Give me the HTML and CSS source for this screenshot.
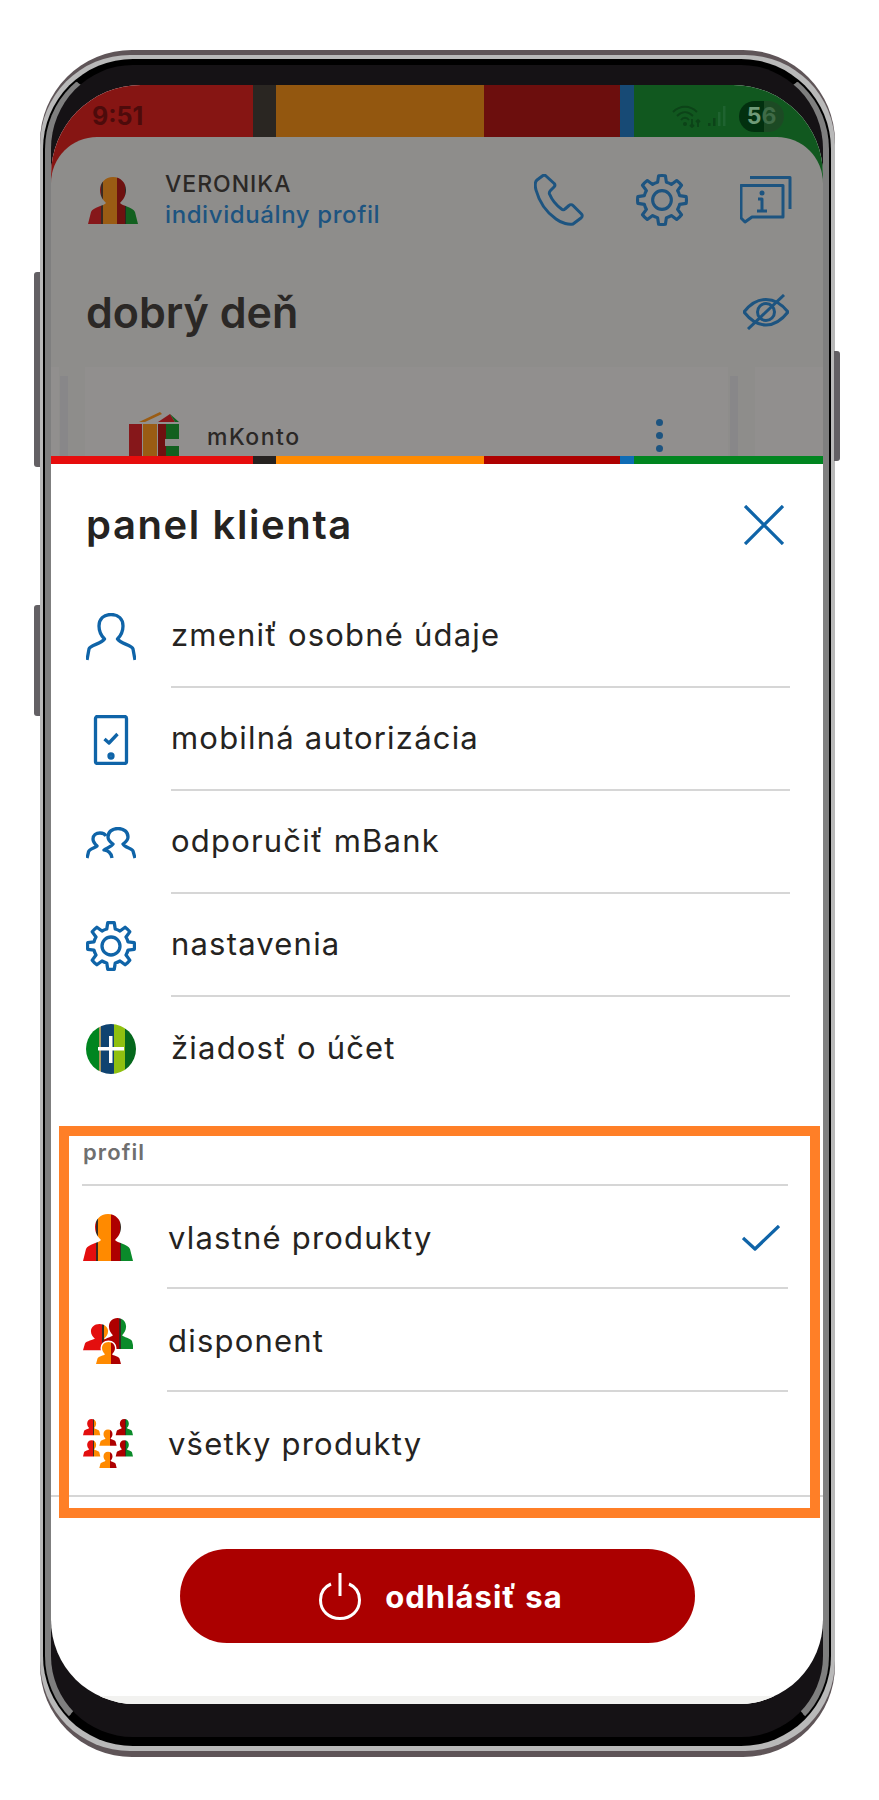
FILE: index.html
```html
<!DOCTYPE html>
<html lang="sk">
  <head>
    <meta charset="utf-8" />
    <title>mBank - panel klienta</title>
    <link rel="stylesheet" href="styles.css">
  </head>

  <body>
    <!-- shared gradients and shapes -->
    <svg class="defs" width="0" height="0" aria-hidden="true">
      <defs>
        <linearGradient id="g-all">
          <stop offset="0" stop-color="#e30e0e"/><stop offset=".26" stop-color="#e30e0e"/>
          <stop offset=".26" stop-color="#3a2a22"/><stop offset=".29" stop-color="#3a2a22"/>
          <stop offset=".29" stop-color="#ff8a00"/><stop offset=".57" stop-color="#ff8a00"/>
          <stop offset=".57" stop-color="#ae0000"/><stop offset=".74" stop-color="#ae0000"/>
          <stop offset=".74" stop-color="#3a2a22"/><stop offset=".76" stop-color="#3a2a22"/>
          <stop offset=".76" stop-color="#0a8a2a"/><stop offset="1" stop-color="#0a8a2a"/>
        </linearGradient>
        <linearGradient id="g-all-dim">
          <stop offset="0" stop-color="#86171a"/><stop offset=".26" stop-color="#86171a"/>
          <stop offset=".26" stop-color="#3a2a22"/><stop offset=".29" stop-color="#3a2a22"/>
          <stop offset=".29" stop-color="#9a5c14"/><stop offset=".57" stop-color="#9a5c14"/>
          <stop offset=".57" stop-color="#6e1110"/><stop offset=".74" stop-color="#6e1110"/>
          <stop offset=".74" stop-color="#2a2622"/><stop offset=".76" stop-color="#2a2622"/>
          <stop offset=".76" stop-color="#12601f"/><stop offset="1" stop-color="#12601f"/>
        </linearGradient>
        <linearGradient id="g-left">
          <stop offset="0" stop-color="#e30e0e"/><stop offset=".58" stop-color="#e30e0e"/>
          <stop offset=".58" stop-color="#3a2a22"/><stop offset=".64" stop-color="#3a2a22"/>
          <stop offset=".64" stop-color="#ff8a00"/><stop offset="1" stop-color="#ff8a00"/>
        </linearGradient>
        <linearGradient id="g-right">
          <stop offset="0" stop-color="#ae0000"/><stop offset=".55" stop-color="#ae0000"/>
          <stop offset=".55" stop-color="#3a2a22"/><stop offset=".6" stop-color="#3a2a22"/>
          <stop offset=".6" stop-color="#0a8a2a"/><stop offset="1" stop-color="#0a8a2a"/>
        </linearGradient>
        <linearGradient id="g-mid">
          <stop offset="0" stop-color="#ff8a00"/><stop offset=".62" stop-color="#ff8a00"/>
          <stop offset=".62" stop-color="#ae0000"/><stop offset="1" stop-color="#ae0000"/>
        </linearGradient>
        <path id="person" d="M25 0C33 0 38 6 38 13C38 19 35 23 32 26C34 29 45 30 47 35L50 47H0L3 35C5 30 16 29 18 26C15 23 12 19 12 13C12 6 17 0 25 0Z"/>
        <g id="gear">
          <path d="M20.770 8.020L21.730 1.730A23.500 23.500 0 0 1 28.270 1.730L29.230 8.020A17.500 17.500 0 0 1 34.010 10L39.140 6.230A23.500 23.500 0 0 1 43.770 10.860L40 15.990A17.500 17.500 0 0 1 41.980 20.770L48.270 21.730A23.500 23.500 0 0 1 48.270 28.270L41.980 29.230A17.500 17.500 0 0 1 40 34.010L43.770 39.140A23.500 23.500 0 0 1 39.140 43.770L34.010 40A17.500 17.500 0 0 1 29.230 41.980L28.270 48.270A23.500 23.500 0 0 1 21.730 48.270L20.770 41.980A17.500 17.500 0 0 1 15.990 40L10.860 43.770A23.500 23.500 0 0 1 6.230 39.140L10 34.010A17.500 17.500 0 0 1 8.020 29.230L1.730 28.270A23.500 23.500 0 0 1 1.730 21.730L8.020 20.770A17.500 17.500 0 0 1 10 15.990L6.230 10.860A23.500 23.500 0 0 1 10.860 6.230L15.990 10A17.500 17.500 0 0 1 20.770 8.020Z"/>
          <circle cx="25" cy="25" r="9"/>
        </g>
      </defs>
    </svg>

    <div class="phone">
      <span class="phone__key phone__key--volup"></span>
      <span class="phone__key phone__key--voldown"></span>
      <span class="phone__key phone__key--power"></span>

      <div class="phone__rim">
        <div class="phone__bezel">
          <div class="screen">

            <!-- dimmed app behind the panel -->
            <div class="backdrop">
              <div class="status">
                <span class="status__time">9:51</span>
                <div class="status__right">
                  <svg class="status__wifi" viewBox="0 0 30 24" fill="none" stroke="#0c4318" stroke-width="1.8">
                    <path d="M1 8C8 1 18 1 25 8M5 12C10 7 16 7 21 12M9 16C11 13 15 13 17 16"/>
                    <circle cx="13" cy="20" r="2" fill="#0c4318" stroke="none"/>
                    <path d="M20 15V23M18 21L20 23L22 21M26 23V16M24 18L26 16L28 18"/>
                  </svg>
                  <svg class="status__signal" viewBox="0 0 20 22">
                    <rect x="0" y="18" width="2.500" height="3" fill="#0c4318"/>
                    <rect x="5" y="13" width="2.500" height="8" fill="#0c4318"/>
                    <rect x="10" y="7" width="2.500" height="14" fill="#1f6330"/>
                    <rect x="15" y="1" width="2.500" height="20" fill="#1f6330"/>
                  </svg>
                  <span class="status__battery"><span class="status__digit">5</span><span class="status__digit status__digit--rest">6</span></span>
                </div>
              </div>

              <div class="home">
                <div class="home__top">
                  <svg class="home__avatar" viewBox="0 0 50 47"><use href="#person" fill="url(#g-all-dim)"/></svg>
                  <div class="home__user">
                    <div class="home__name">VERONIKA</div>
                    <div class="home__profile">individuálny profil</div>
                  </div>
                  <div class="home__actions">
                    <svg class="icon-dark" width="50" height="52" viewBox="0 0 50 52">
                      <path d="M9 1.500L3 6C0.500 8 1 12 2 16C5 27 12 38 22 45C28 49.500 35 51 39 50L47 44C48.500 43 48.500 41 47.500 40L39 31.500C38 30.500 36 30.500 35 31.500L31 35C30 36 28.500 36 27.500 35C22 31 18 26 15.500 20C15 18.500 15.500 17.500 16.500 16.500L20 13C21 12 21 10.500 20.200 9.500L12 2C11 1 10 1 9 1.500Z"/>
                    </svg>
                    <svg class="icon-dark" width="52" height="52" viewBox="0 0 50 50"><use href="#gear"/></svg>
                    <svg class="icon-dark" width="52" height="48" viewBox="0 0 52 48">
                      <path d="M10 1.500H50V33M1 9.500H43V41H12L5 46L1 42Z"/>
                      <circle cx="22" cy="17" r="2.500" fill="#1d5480" stroke="none"/>
                      <path d="M18 23H22V35M17 35H27"/>
                    </svg>
                  </div>
                </div>

                <div class="home__hello">
                  <h2 class="home__title">dobrý deň</h2>
                  <svg class="icon-dark" width="46" height="36" viewBox="0 0 46 36">
                    <path d="M1 18C8 9 15 5.500 23 5.500C31 5.500 38 9 45 18C38 27 31 31 23 31C15 31 8 27 1 18Z"/>
                    <circle cx="23" cy="18" r="8.500"/>
                    <path d="M5 35L41 1"/>
                  </svg>
                </div>

                <div class="cards">
                  <span class="cards__edge"></span>
                  <span class="cards__bar"></span>
                  <div class="card">
                    <svg class="card__icon" width="50" height="45" viewBox="0 0 50 45">
                      <path d="M10 11L31 1L33 3L16 11Z" fill="#9a5c14"/>
                      <path d="M29 11L41 3L46 11Z" fill="#86171a"/>
                      <path d="M41 3L46 11H50Z" fill="#12601f"/>
                      <rect x="0" y="13" width="13" height="32" fill="#86171a"/>
                      <rect x="14" y="13" width="14" height="32" fill="#9a5c14"/>
                      <rect x="29" y="13" width="8" height="32" fill="#6e1110"/>
                      <rect x="37" y="13" width="13" height="32" fill="#12601f"/>
                      <rect x="36" y="28" width="14" height="7" fill="#8e8d8b"/>
                    </svg>
                    <span class="card__name">mKonto</span>
                    <span class="card__more"><i></i><i></i><i></i></span>
                  </div>
                  <span class="cards__bar"></span>
                  <span class="cards__next"></span>
                </div>
              </div>
            </div>

            <div class="stripes"></div>

            <!-- client panel -->
            <div class="panel">
              <div class="panel__head">
                <h1 class="panel__title">panel klienta</h1>
                <svg class="icon" width="40" height="40" viewBox="0 0 40 40">
                  <path d="M1 1L39 39M39 1L1 39"/>
                </svg>
              </div>

              <ul class="menu">
                <li class="menu__item">
                  <svg class="icon menu__icon" width="50" height="48" viewBox="0 0 50 48">
                    <path d="M1 47L3 36C4 32 15 31 18.500 26C15.500 23 13 19 13 13C13 6 17.500 1.500 25 1.500C32.500 1.500 37 6 37 13C37 19 34.500 23 31.500 26C35 31 46 32 47 36L49 47"/>
                  </svg>
                  <span class="menu__label">zmeniť osobné údaje</span>
                </li>
                <li class="menu__item">
                  <svg class="icon menu__icon" width="50" height="50" viewBox="0 0 50 50">
                    <rect x="9.500" y="1.500" width="31" height="47" rx="2"/>
                    <path d="M18.500 24L23 28L31.500 19"/>
                    <circle cx="25" cy="41" r="2"/>
                  </svg>
                  <span class="menu__label">mobilná autorizácia</span>
                </li>
                <li class="menu__item">
                  <svg class="icon menu__icon" width="50" height="32" viewBox="0 0 50 32">
                    <path d="M1 31L2.500 25C3 22 9 21 11 19C9 17 7 15 7 12C7 8 10 6 14 6C17 6 19 7 20 9"/>
                    <path d="M49 31L47 24C46 21 39 21 37 17C40 15 42 12 42 10C42 5 38 1.500 32 1.500C26 1.500 22 5 22 10C22 12 24 15 27 17C25 20 21 21 18 23C22 24 25 25 26 31"/>
                  </svg>
                  <span class="menu__label">odporučiť mBank</span>
                </li>
                <li class="menu__item">
                  <svg class="icon menu__icon" width="50" height="50" viewBox="0 0 50 50"><use href="#gear"/></svg>
                  <span class="menu__label">nastavenia</span>
                </li>
                <li class="menu__item menu__item--last">
                  <svg class="menu__icon" width="50" height="50" viewBox="0 0 50 50">
                    <defs><clipPath id="round"><circle cx="25" cy="25" r="25"/></clipPath></defs>
                    <g clip-path="url(#round)">
                      <rect width="13" height="50" fill="#008520"/>
                      <rect x="13" width="2" height="50" fill="#a8955a"/>
                      <rect x="15" width="13" height="50" fill="#0f4370"/>
                      <rect x="28" width="11" height="50" fill="#8fc010"/>
                      <rect x="39" width="11" height="50" fill="#05681c"/>
                      <rect x="12" y="23" width="26" height="3.500" fill="#fff"/>
                      <rect x="23" y="12" width="3.500" height="27" fill="#fff"/>
                    </g>
                  </svg>
                  <span class="menu__label">žiadosť o účet</span>
                </li>
              </ul>

              <div class="profile">
                <div class="profile__label">profil</div>
                <ul class="profile__list">
                  <li class="profile__item">
                    <svg class="profile__icon" width="50" height="47" viewBox="0 0 50 47"><use href="#person" fill="url(#g-all)"/></svg>
                    <span class="profile__name">vlastné produkty</span>
                    <svg class="icon profile__check" width="38" height="26" viewBox="0 0 38 26"><path d="M1 13L13 24L37 1"/></svg>
                  </li>
                  <li class="profile__item">
                    <svg class="profile__icon" width="50" height="46" viewBox="0 0 50 46">
                      <use href="#person" transform="translate(0 6) scale(.66 .56)" fill="url(#g-left)"/>
                      <use href="#person" transform="translate(18 0) scale(.66 .66)" fill="url(#g-right)"/>
                      <use href="#person" transform="translate(13 24) scale(.5 .47)" fill="url(#g-mid)" stroke="#fff" stroke-width="6" paint-order="stroke"/>
                    </svg>
                    <span class="profile__name">disponent</span>
                  </li>
                  <li class="profile__item profile__item--last">
                    <svg class="profile__icon" width="50" height="51" viewBox="0 0 52 51">
                      <use href="#person" transform="translate(0 0) scale(.36 .36)" fill="url(#g-left)"/>
                      <use href="#person" transform="translate(34 0) scale(.36 .36)" fill="url(#g-right)"/>
                      <use href="#person" transform="translate(17 11) scale(.36 .36)" fill="url(#g-mid)"/>
                      <use href="#person" transform="translate(0 22) scale(.36 .36)" fill="url(#g-left)"/>
                      <use href="#person" transform="translate(34 22) scale(.36 .36)" fill="url(#g-right)"/>
                      <use href="#person" transform="translate(17 34) scale(.36 .36)" fill="url(#g-mid)"/>
                    </svg>
                    <span class="profile__name">všetky produkty</span>
                  </li>
                </ul>
              </div>

              <button class="logout">
                <svg class="logout__icon" width="42" height="48" viewBox="0 0 42 48">
                  <path d="M12 12C5 15 1.500 21 1.500 28C1.500 39 10 46.500 21 46.500C32 46.500 40.500 39 40.500 28C40.500 21 37 15 30 12M21 1V24"/>
                </svg>
                odhlásiť sa
              </button>

              <div class="panel__foot"></div>
            </div>

            <!-- orange highlight drawn over the screenshot -->
            <div class="highlight"></div>
          </div>
        </div>
      </div>
    </div>
  </body>
</html>
```

FILE: styles.css
```css
* {
  box-sizing: border-box;
}

body {
  background: #fff;
  color: #252321;
  font-family: Inter, "Noto Sans", sans-serif;
  margin: 0;
}

ul {
  list-style: none;
  margin: 0;
  padding: 0;
}

.defs {
  display: block;
  position: absolute;
}

.phone {
  background: #5f5558;
  border-radius: 92px;
  margin: 50px 0 0 40px;
  padding: 5px 0 6px;
  position: relative;
  width: 795px;
}

.phone__key {
  background: #636064;
  position: absolute;
  width: 6px;
}

.phone__key--volup {
  border-radius: 3px 0 0 3px;
  height: 195px;
  left: -6px;
  top: 222px;
}

.phone__key--voldown {
  border-radius: 3px 0 0 3px;
  height: 111px;
  left: -6px;
  top: 555px;
}

.phone__key--power {
  border-radius: 0 3px 3px 0;
  height: 110px;
  right: -5px;
  top: 301px;
}

.phone__rim {
  background: #b9b9b9;
  border-radius: 90px;
  padding: 6px 6px 7px 5px;
}

.phone__bezel {
  background: #151215;
  border-color: #000 #7f7f7f #000 #7f7f7f;
  border-radius: 88px;
  border-style: solid;
  border-width: 4px 6px 7px 6px;
  box-shadow: 0 0 0 2px #000;
  padding: 20px 0 33px;
}

.screen {
  background: #fff;
  border-radius: 90px 90px 84px 84px;
  overflow: hidden;
  position: relative;
  width: 772px;
}

/* backdrop: the app dimmed behind the panel */
.backdrop {
  background: linear-gradient(90deg,
    #861513 0, #861513 202px,
    #2a2622 202px, #2a2622 225px,
    #93570f 225px, #93570f 433px,
    #6c0e0d 433px, #6c0e0d 569px,
    #174a75 569px, #174a75 583px,
    #11581f 583px, #11581f 100%);
  height: 371px;
}

.status {
  align-items: center;
  display: flex;
  height: 52px;
  justify-content: space-between;
  padding: 20px 39px 10px 41px;
}

.status__time {
  color: #4d0b0b;
  font-size: 25px;
  font-weight: 700;
}

.status__right {
  align-items: center;
  display: flex;
}

.status__wifi {
  height: 24px;
  margin-right: 6px;
  width: 30px;
}

.status__signal {
  height: 22px;
  margin-right: 11px;
  width: 20px;
}

.status__battery {
  background: linear-gradient(90deg, #02300f 0, #02300f 55%, #1c4a24 55%, #1c4a24 100%);
  border-radius: 16px;
  font-size: 23px;
  font-weight: 700;
  height: 31px;
  line-height: 31px;
  text-align: center;
  width: 45px;
}

.status__digit {
  color: #6f9a78;
}

.status__digit--rest {
  color: #3f6b47;
}

.home {
  background: #8e8d8b;
  border-radius: 46px 46px 0 0;
  height: 319px;
}

.home__top {
  align-items: center;
  display: flex;
  padding: 32px 31px 0 37px;
}

.home__avatar {
  height: 47px;
  margin-right: 27px;
  width: 50px;
}

.home__user {
  flex: 1;
}

.home__name {
  color: #2b2826;
  font-size: 23px;
  font-weight: 500;
  letter-spacing: 1px;
  line-height: 30px;
}

.home__profile {
  color: #1d5480;
  font-size: 24px;
  font-weight: 500;
  letter-spacing: .6px;
  line-height: 32px;
}

.home__actions {
  align-items: center;
  display: flex;
  gap: 52px;
}

.icon-dark {
  fill: none;
  stroke: #1d5480;
  stroke-linejoin: round;
  stroke-width: 3;
}

.home__hello {
  align-items: center;
  display: flex;
  height: 60px;
  justify-content: space-between;
  margin-top: 51px;
  padding: 0 34px 0 35px;
}

.home__title {
  color: #2b2826;
  font-size: 43px;
  font-weight: 600;
  margin: 0;
}

.cards {
  display: flex;
  height: 89px;
  margin-top: 25px;
  padding-left: 9px;
  position: relative;
}

.cards__edge {
  background: #918f8e;
  height: 89px;
  left: 0;
  position: absolute;
  width: 8px;
}

.cards__bar {
  background: #888789;
  flex: none;
  margin-top: 9px;
  width: 8px;
}

.card {
  align-items: flex-end;
  background: #918f8e;
  display: flex;
  height: 89px;
  margin: 0 2px 0 17px;
  overflow: hidden;
  padding: 0 0 0 44px;
  position: relative;
  width: 643px;
}

.card__icon {
  flex: none;
  margin-right: 28px;
}

.card__name {
  color: #2b2826;
  font-size: 23px;
  font-weight: 500;
  letter-spacing: 1.500px;
  margin-bottom: 5px;
}

.card__more {
  display: flex;
  flex-direction: column;
  gap: 6px;
  margin-left: auto;
  margin-right: 65px;
  padding-bottom: 4px;
}

.card__more i {
  background: #1d5480;
  border-radius: 50%;
  display: block;
  height: 7px;
  width: 7px;
}

.cards__next {
  background: #918f8e;
  flex: 1;
  margin-left: 17px;
}

/* brand stripes on top of the panel */
.stripes {
  background: linear-gradient(90deg,
    #e60d0d 0, #e60d0d 202px,
    #262220 202px, #262220 225px,
    #ff8a00 225px, #ff8a00 433px,
    #ae0000 433px, #ae0000 569px,
    #0f6cb5 569px, #0f6cb5 583px,
    #008520 583px, #008520 100%);
  height: 8px;
}

.icon {
  fill: none;
  stroke: #0f64a8;
  stroke-linejoin: round;
  stroke-width: 3.300;
}

.panel__head {
  align-items: center;
  display: flex;
  height: 121px;
  justify-content: space-between;
  padding: 0 39px 0 35px;
}

.panel__title {
  font-size: 40px;
  font-weight: 600;
  letter-spacing: 1.600px;
  margin: 0;
}

.menu__item {
  align-items: center;
  display: flex;
  height: 103px;
  padding: 0 33px 0 35px;
}

.menu__icon {
  flex: none;
  margin-right: 35px;
}

.menu__label {
  align-items: center;
  border-bottom: 2px solid #d6d6d6;
  display: flex;
  flex: 1;
  font-size: 31px;
  height: 103px;
  letter-spacing: 1.200px;
  padding-bottom: 2px;
}

.menu__item--last .menu__label {
  border-bottom: 0;
}

.profile {
  border-bottom: 2px solid #d6d6d6;
  padding-top: 39px;
}

.profile__label {
  color: #6f6f6f;
  font-size: 22px;
  font-weight: 600;
  letter-spacing: 1.100px;
  line-height: 26px;
  padding-left: 32px;
}

.profile__list {
  border-top: 2px solid #d6d6d6;
  margin: 19px 35px 0 31px;
}

.profile__item {
  align-items: center;
  display: flex;
  height: 103px;
  position: relative;
}

.profile__item::after {
  background: #d6d6d6;
  bottom: 0;
  content: "";
  height: 2px;
  left: 85px;
  position: absolute;
  right: 0;
}

.profile__item--last::after {
  display: none;
}

.profile__icon {
  flex: none;
  margin: 0 35px 0 1px;
}

.profile__name {
  flex: 1;
  font-size: 31px;
  letter-spacing: 1.200px;
}

.profile__check {
  margin-right: 8px;
}

.logout {
  align-items: center;
  background: #ab0000;
  border: 0;
  border-radius: 47px;
  color: #fff;
  display: flex;
  font-family: inherit;
  font-size: 31px;
  font-weight: 700;
  gap: 24px;
  height: 94px;
  justify-content: center;
  letter-spacing: 1px;
  margin: 52px 0 0 129px;
  padding-left: 13px;
  width: 515px;
}

.logout__icon {
  fill: none;
  stroke: #fff;
  stroke-width: 3;
}

.panel__foot {
  background: #f2f2f0;
  height: 8px;
  margin-top: 53px;
}

.highlight {
  border: 10px solid #ff7f27;
  height: 392px;
  left: 8px;
  position: absolute;
  top: 1041px;
  width: 761px;
}
```
